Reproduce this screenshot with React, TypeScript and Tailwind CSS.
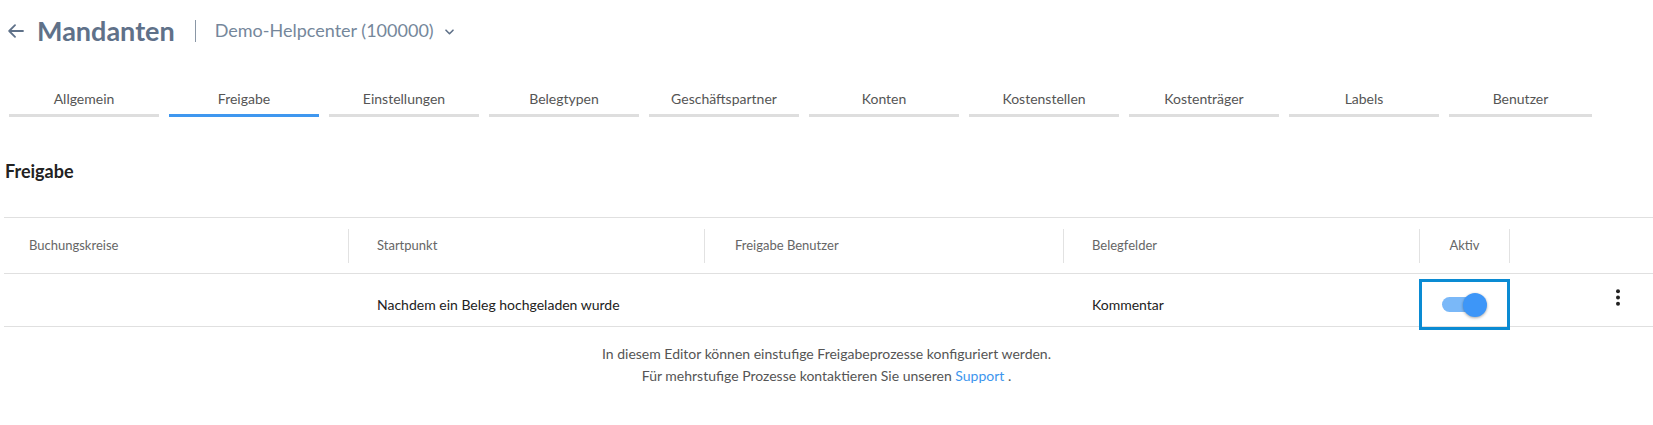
import React from "react";

const tabs = [
  "Allgemein",
  "Freigabe",
  "Einstellungen",
  "Belegtypen",
  "Geschäftspartner",
  "Konten",
  "Kostenstellen",
  "Kostenträger",
  "Labels",
  "Benutzer",
];

function Divider() {
  return <div className="h-[34px] w-px bg-[#e2e2e2] shrink-0" />;
}

export default function App() {
  const active = "Freigabe";

  return (
    <div className="min-h-screen bg-white font-['Lato','Open_Sans',sans-serif] text-[#222]">
      {/* page header */}
      <div className="flex items-center h-[61px] pl-[8px]">
        <svg width="16" height="14" viewBox="0 0 16 14" fill="none" stroke="#5f7189" strokeWidth="1.8" strokeLinecap="round" strokeLinejoin="round">
          <path d="M15 7H1.5M7 1.2L1.2 7l5.8 5.8" />
        </svg>
        <h1 className="ml-[13px] text-[27px] font-bold text-[#5f7189] leading-none">
          Mandanten
        </h1>
        <div className="ml-[20px] h-[22px] w-px bg-[#8a97a6]" />
        <div className="ml-[19px] flex items-center text-[18px] text-[#75879b]">
          Demo-Helpcenter (100000)
          <svg width="9" height="6" viewBox="0 0 9 6" fill="none" stroke="#5f7189" strokeWidth="1.6" strokeLinecap="round" strokeLinejoin="round" className="ml-[11px] mt-[3px]">
            <path d="M1 1.2l3.5 3.5L8 1.2" />
          </svg>
        </div>
      </div>

      {/* tabs */}
      <div className="mt-[28px] flex gap-[10px] pl-[9px]">
        {tabs.map((t, i) => (
          <div
            key={t}
            className={`${i === tabs.length - 1 ? "w-[143px]" : "w-[150px]"} flex flex-col items-center`}
          >
            <div className="h-[20px] leading-[20px] text-[14px] text-[#555]">{t}</div>
            <div
              className={`mt-[5px] h-[3px] w-full ${
                t === active ? "bg-[#3f97ef]" : "bg-[#dedede]"
              }`}
            />
          </div>
        ))}
      </div>

      {/* section */}
      <h2 className="mt-[42px] pl-[5px] text-[18px] leading-[24px] font-bold text-[#222]">
        Freigabe
      </h2>

      <div className="mt-[34px] ml-[4px]">
        {/* header row */}
        <div className="flex items-center h-[57px] border-t border-b border-[#e0e0e0] text-[13px] text-[#666]">
          <div className="w-[345px] flex items-center justify-between">
            <span className="pl-[25px]">Buchungskreise</span>
            <Divider />
          </div>
          <div className="w-[356px] flex items-center justify-between">
            <span className="pl-[28px]">Startpunkt</span>
            <Divider />
          </div>
          <div className="w-[359px] flex items-center justify-between">
            <span className="pl-[30px]">Freigabe Benutzer</span>
            <Divider />
          </div>
          <div className="w-[356px] flex items-center justify-between">
            <span className="pl-[28px]">Belegfelder</span>
            <Divider />
          </div>
          <div className="w-[90px] flex items-center justify-between">
            <span className="flex-1 text-center">Aktiv</span>
            <Divider />
          </div>
          <div className="flex-1" />
        </div>

        {/* data row */}
        <div className="flex items-center h-[53px] pt-[9px] border-b border-[#e0e0e0] text-[14px] text-[#222]">
          <div className="w-[345px]" />
          <div className="w-[356px] pl-[28px]">Nachdem ein Beleg hochgeladen wurde</div>
          <div className="w-[359px]" />
          <div className="w-[356px] pl-[28px]">Kommentar</div>
          <div className="relative w-[90px] self-stretch">
            <div className="absolute left-[-1px] top-[-4px] w-[91px] h-[51px] border-[3px] border-[#0a8bd3] flex items-center justify-center">
              <div className="relative w-[45px] h-[24px] flex items-center">
                <div className="h-[15px] w-[42px] rounded-full bg-[#7ab8f8]" />
                <div className="absolute right-0 top-0 h-[24px] w-[24px] rounded-full bg-[#3d96f8] shadow-[0_1px_3px_rgba(0,0,0,0.35)]" />
              </div>
            </div>
          </div>
          <div className="flex-1 flex justify-end pr-[33px] mb-[15px]">
            <svg width="4" height="17" viewBox="0 0 4 17" fill="#222">
              <circle cx="2" cy="2.2" r="2" />
              <circle cx="2" cy="8.5" r="2" />
              <circle cx="2" cy="14.8" r="2" />
            </svg>
          </div>
        </div>
      </div>

      {/* footer note */}
      <div className="mt-[16px] text-center text-[14px] leading-[22px] text-[#555]">
        <p>In diesem Editor können einstufige Freigabeprozesse konfiguriert werden.</p>
        <p>
          Für mehrstufige Prozesse kontaktieren Sie unseren{" "}
          <span className="text-[#3d96ee]">Support</span> .
        </p>
      </div>
    </div>
  );
}
